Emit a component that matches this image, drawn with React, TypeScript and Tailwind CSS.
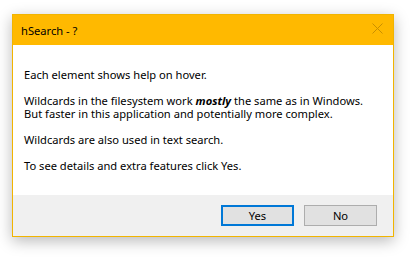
export default function App() {
  return (
    <div className="w-[414px] h-[259px] bg-white pt-[14px] pl-[12px] font-['Noto_Sans',sans-serif] text-[11.15px] leading-[13px] text-black">
      <div className="w-[382px] h-[223px] flex flex-col border border-[#f1b400] shadow-[0_4px_14px_rgba(0,0,0,0.28)]">
        <div className="h-[30px] shrink-0 bg-[#ffb900] flex items-center justify-between pl-[8px] pr-[10px]">
          <span>hSearch - ?</span>
          <svg width="11" height="11" viewBox="0 0 11 11" className="text-[#c98f00] mb-[3px]">
            <path d="M0.5 0.5 L10.5 10.5 M10.5 0.5 L0.5 10.5" stroke="currentColor" strokeWidth="1" />
          </svg>
        </div>
        <div className="h-[150px] shrink-0 bg-white pl-[11px] pt-[23px]">
          <p>Each element shows help on hover.</p>
          <p className="mt-[13px]">
            Wildcards in the filesystem work <b className="italic">mostly</b> the same as in Windows.
            <br />
            But faster in this application and potentially more complex.
          </p>
          <p className="mt-[13px]">Wildcards are also used in text search.</p>
          <p className="mt-[13px]">To see details and extra features click Yes.</p>
        </div>
        <div className="flex-1 bg-[#f0f0f0] flex justify-end items-start pt-[10px] pr-[16px] gap-[10px]">
          <button className="w-[73px] h-[21px] bg-[#e1e1e1] border-2 border-[#0078d7] flex items-center justify-center">Yes</button>
          <button className="w-[73px] h-[21px] bg-[#e1e1e1] border border-[#adadad] flex items-center justify-center">No</button>
        </div>
      </div>
    </div>
  );
}
